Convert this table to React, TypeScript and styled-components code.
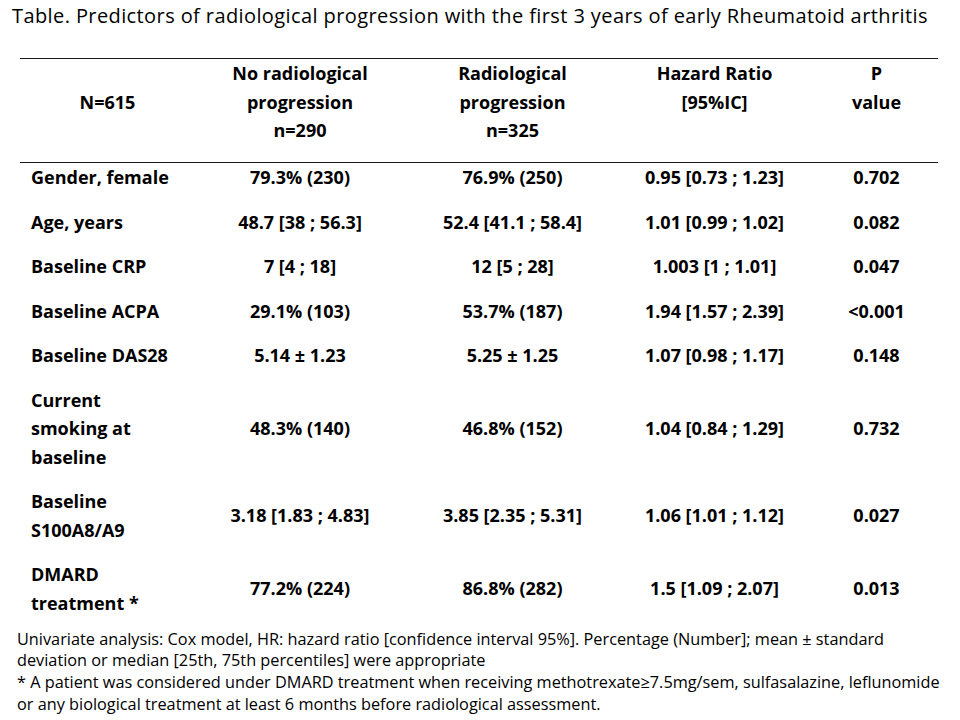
import styled, { createGlobalStyle } from "styled-components";

const GlobalStyle = createGlobalStyle`
  html, body {
    margin: 0;
    padding: 0;
    background: #ffffff;
  }
  body {
    font-family: "Open Sans", "Lato", "Liberation Sans", sans-serif;
    color: #000000;
  }
`;

const Page = styled.div`
  width: 960px;
  height: 720px;
  display: flex;
  flex-direction: column;
  box-sizing: border-box;
  padding-top: 3px;
  overflow: hidden;
`;

const Title = styled.h1`
  margin: 0 0 0 12px;
  font-size: 20px;
  font-weight: 400;
  letter-spacing: 0.4px;
  line-height: 26px;
  white-space: nowrap;
`;

const Table = styled.table`
  margin: 29px 0 0 20px;
  width: 918px;
  border-collapse: collapse;
  table-layout: fixed;
  font-weight: 700;
  font-size: 18px;
  line-height: 28.5px;

  tr > :nth-child(4) {
    padding-right: 6px;
  }
  tbody tr:last-child td {
    padding-bottom: 8px;
  }
`;

const HeadRow = styled.tr`
  border-top: 1px solid #1a1a1a;
  border-bottom: 1px solid #1a1a1a;
`;

const HeadCell = styled.th<{ $middle?: boolean }>`
  padding: 0 0 17.5px;
  text-align: center;
  vertical-align: ${(p) => (p.$middle ? "middle" : "top")};
  font-weight: 700;
`;

const Cell = styled.td<{ $label?: boolean }>`
  padding: 0 0 16px ${(p) => (p.$label ? "11px" : "0")};
  text-align: ${(p) => (p.$label ? "left" : "center")};
  vertical-align: middle;
  white-space: nowrap;
`;

const Notes = styled.p`
  margin: 3.5px 0 0 17px;
  font-size: 16.3px;
  line-height: 21.8px;
  white-space: nowrap;
`;

const widths = [175, 210, 215, 195, 123];

const headers = [
  ["N=615"],
  ["No radiological", "progression", "n=290"],
  ["Radiological", "progression", "n=325"],
  ["Hazard Ratio", "[95%IC]"],
  ["P", "value"],
];

const rows: [string[], string, string, string, string][] = [
  [["Gender, female"], "79.3% (230)", "76.9% (250)", "0.95 [0.73 ; 1.23]", "0.702"],
  [["Age, years"], "48.7 [38 ; 56.3]", "52.4 [41.1 ; 58.4]", "1.01 [0.99 ; 1.02]", "0.082"],
  [["Baseline CRP"], "7 [4 ; 18]", "12 [5 ; 28]", "1.003 [1 ; 1.01]", "0.047"],
  [["Baseline ACPA"], "29.1% (103)", "53.7% (187)", "1.94 [1.57 ; 2.39]", "<0.001"],
  [["Baseline DAS28"], "5.14 ± 1.23", "5.25 ± 1.25", "1.07 [0.98 ; 1.17]", "0.148"],
  [["Current", "smoking at", "baseline"], "48.3% (140)", "46.8% (152)", "1.04 [0.84 ; 1.29]", "0.732"],
  [["Baseline", "S100A8/A9"], "3.18 [1.83 ; 4.83]", "3.85 [2.35 ; 5.31]", "1.06 [1.01 ; 1.12]", "0.027"],
  [["DMARD", "treatment *"], "77.2% (224)", "86.8% (282)", "1.5 [1.09 ; 2.07]", "0.013"],
];

const Lines = ({ lines }: { lines: string[] }) => (
  <>
    {lines.map((l, i) => (
      <span key={i}>
        {i > 0 && <br />}
        {l}
      </span>
    ))}
  </>
);

export default function App() {
  return (
    <Page>
      <GlobalStyle />
      <Title>
        Table. Predictors of radiological progression with the first 3 years of early Rheumatoid arthritis
      </Title>
      <Table>
        <colgroup>
          {widths.map((w, i) => (
            <col key={i} style={{ width: w }} />
          ))}
        </colgroup>
        <thead>
          <HeadRow>
            {headers.map((h, i) => (
              <HeadCell key={i} $middle={i === 0}>
                <Lines lines={h} />
              </HeadCell>
            ))}
          </HeadRow>
        </thead>
        <tbody>
          {rows.map(([label, a, b, hr, p], i) => (
            <tr key={i}>
              <Cell $label>
                <Lines lines={label} />
              </Cell>
              <Cell>{a}</Cell>
              <Cell>{b}</Cell>
              <Cell>{hr}</Cell>
              <Cell>{p}</Cell>
            </tr>
          ))}
        </tbody>
      </Table>
      <Notes>
        Univariate analysis: Cox model, HR: hazard ratio [confidence interval 95%]. Percentage (Number]; mean ± standard
        <br />
        deviation or median [25th, 75th percentiles] were appropriate
        <br />
        * A patient was considered under DMARD treatment when receiving methotrexate≥7.5mg/sem, sulfasalazine, leflunomide
        <br />
        or any biological treatment at least 6 months before radiological assessment.
      </Notes>
    </Page>
  );
}
